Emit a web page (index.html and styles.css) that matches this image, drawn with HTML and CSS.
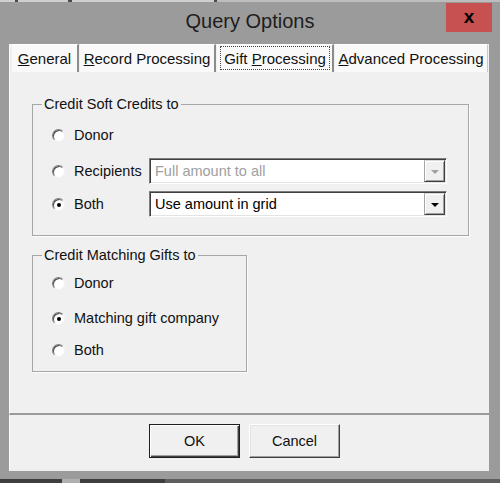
FILE: index.html
```html
<!DOCTYPE html>
<html>
<head>
<meta charset="utf-8">
<link rel="stylesheet" href="styles.css">
</head>
<body>
<div class="window">
  <div class="topstrip"></div>
  <div class="titlebar">
    <div class="title">Query Options</div>
    <div class="close">x</div>
  </div>
  <div class="client">
    <div class="tabs">
      <div class="tab t1"><span><u>G</u>eneral</span></div>
      <div class="tab t2"><span><u>R</u>ecord Processing</span></div>
      <div class="tab t3 active"><span class="focus"><span>Gift <u>P</u>rocessing</span></span></div>
      <div class="tab t4"><span><u>A</u>dvanced Processing</span></div>
    </div>
    <div class="panel">
      <fieldset class="group g1">
        <legend>Credit Soft Credits to</legend>
        <div class="row r1"><span class="radio"></span><span class="lbl">Donor</span></div>
        <div class="row r2"><span class="radio"></span><span class="lbl">Recipients</span>
          <div class="combo disabled"><span class="ctext">Full amount to all</span><span class="dd"></span></div>
        </div>
        <div class="row r3"><span class="radio checked"></span><span class="lbl">Both</span>
          <div class="combo"><span class="ctext">Use amount in grid</span><span class="dd"></span></div>
        </div>
      </fieldset>
      <fieldset class="group g2">
        <legend>Credit Matching Gifts to</legend>
        <div class="row m1"><span class="radio"></span><span>Donor</span></div>
        <div class="row m2"><span class="radio checked"></span><span>Matching gift company</span></div>
        <div class="row m3"><span class="radio"></span><span>Both</span></div>
      </fieldset>
    </div>
    <div class="buttons">
      <div class="btn default">OK</div>
      <div class="btn">Cancel</div>
    </div>
  </div>
  <div class="bottomframe"></div>
  <div class="bottomstrip"></div>
</div>
</body>
</html>
```
FILE: styles.css
```css
html, body {
  margin: 0;
  padding: 0;
  background: #9b9b9b;
}
body {
  font-family: "Liberation Sans", Arial, sans-serif;
  font-size: 14.5px;
  color: #111;
}
.window {
  width: 500px;
  height: 483px;
  background: #9b9b9b;
  display: flex;
  flex-direction: column;
  overflow: hidden;
}
.topstrip {
  height: 2px;
  flex: none;
  background: linear-gradient(to right, #cfcfcf 0 15px, #4a4a4a 15px 18px, #cfcfcf 18px 68px, #4a4a4a 68px 72px, #cfcfcf 72px 214px, #4a4a4a 214px 217px, #bdbdbd 217px);
}
.titlebar {
  height: 42px;
  flex: none;
  display: grid;
  grid-template-columns: 1fr auto 1fr;
}
.title {
  grid-column: 2;
  align-self: center;
  font-size: 20px;
  color: #1d1d1d;
  padding-bottom: 3px;
}
.close {
  grid-column: 3;
  justify-self: end;
  align-self: start;
  margin: 1px 8px 0 0;
  width: 46px;
  height: 29px;
  background: #c75050;
  color: #000;
  font-weight: bold;
  font-size: 19px;
  line-height: 1;
  display: flex;
  align-items: center;
  justify-content: center;
  padding-bottom: 3px;
  box-sizing: border-box;
}
.client {
  margin-left: 9px;
  width: 480px;
  height: 427px;
  flex: none;
  background: #f0f0f0;
  display: flex;
  flex-direction: column;
  box-shadow: inset 1px 0 0 #fbfbfb;
}
.tabs {
  height: 28px;
  flex: none;
  display: flex;
  padding-left: 3px;
  font-size: 15px;
}
.tab {
  box-sizing: border-box;
  height: 28px;
  background: #f9f9f9;
  border-top: 1px solid #fff;
  border-right: 2px solid #8c8c8c;
  margin-right: 1px;
  display: flex;
  align-items: center;
  justify-content: center;
  flex: none;
  color: #111;
}
.t1 { width: 67px; }
.t2 { width: 136px; }
.t3 { width: 117px; align-items: stretch; }
.t4 { width: 153px; border-right: 1px solid #c8c8c8; margin-right: 0; }
.focus {
  flex: 1;
  margin: 1px 2px 2px 3px;
  border: 1px dotted #444;
  display: flex;
  align-items: center;
  justify-content: center;
}
.panel {
  height: 343px;
  box-sizing: border-box;
  flex: none;
  border-left: 1px solid #fcfcfc;
  border-bottom: 2px solid #9a9a9a;
  padding: 24px 0 0 22px;
  display: flex;
  flex-direction: column;
  align-items: flex-start;
}
.group {
  margin: 0;
  box-sizing: border-box;
  border: 1px solid #a6a6a6;
  box-shadow: 1px 1px 0 #fdfdfd;
  padding: 0 20px 0 19px;
  min-inline-size: 0;
}
.group legend {
  padding: 0 2px;
  margin-left: -10px;
  line-height: 16px;
  color: #111;
}
.g1 {
  width: 437px;
  padding-bottom: 18px;
}
.g2 {
  width: 215px;
  margin-top: 11px;
  padding-bottom: 8px;
}
.row {
  height: 26px;
  display: flex;
  align-items: center;
}
.r1 { margin-top: 10px; }
.r2 { margin-top: 10px; }
.r3 { margin-top: 7px; }
.m1 { margin-top: 7px; }
.m2 { margin-top: 9px; }
.m3 { margin-top: 6px; }
.lbl {
  width: 75px;
  flex: none;
}
.radio {
  width: 13px;
  height: 13px;
  box-sizing: border-box;
  border-radius: 50%;
  background: #fff;
  border: 1px solid;
  border-color: #7e7e7e #f4f4f4 #f4f4f4 #7e7e7e;
  box-shadow: inset 1px 1px 0 #4a4a4a;
  flex: none;
  margin: 0 9px 0 0;
  display: flex;
  align-items: center;
  justify-content: center;
}
.radio.checked::after {
  content: "";
  width: 4px;
  height: 4px;
  border-radius: 50%;
  background: #000;
  margin: 1px 0 0 1px;
}
.combo {
  width: 298px;
  height: 26px;
  box-sizing: border-box;
  flex: none;
  border: 1px solid;
  border-color: #7c7c7c #fff #fff #7c7c7c;
  box-shadow: inset 1px 1px 0 #404040, inset -1px -1px 0 #e3e3e3;
  background: #fff;
  padding: 1px;
  display: flex;
}
.ctext {
  flex: 1;
  padding-left: 4px;
  display: flex;
  align-items: center;
  color: #000;
}
.combo.disabled .ctext {
  color: #a0a0a0;
}
.dd {
  width: 21px;
  flex: none;
  box-sizing: border-box;
  background: #f0f0f0;
  border: 1px solid;
  border-color: #d8d8d8 #404040 #404040 #a6a6a6;
  box-shadow: inset 1px 1px 0 #fff, inset -1px -1px 0 #a0a0a0;
  display: flex;
  align-items: center;
  justify-content: center;
}
.dd::after {
  content: "";
  border-left: 4px solid transparent;
  border-right: 4px solid transparent;
  border-top: 4px solid #000;
  margin-top: 1px;
}
.combo.disabled .dd::after {
  border-top-color: #a0a0a0;
}
.buttons {
  display: flex;
  gap: 9px;
  padding: 9px 0 0 140px;
}
.btn {
  width: 91px;
  height: 34px;
  box-sizing: border-box;
  background: #f0f0f0;
  border: 1px solid;
  border-color: #fff #404040 #404040 #fff;
  box-shadow: inset -1px -1px 0 #a0a0a0, inset 1px 1px 0 #e3e3e3;
  display: flex;
  align-items: center;
  justify-content: center;
  color: #111;
}
.btn.default {
  border-color: #1e1e1e;
  box-shadow: inset 1px 1px 0 #fff, inset -1px -1px 0 #404040, inset -2px -2px 0 #a0a0a0;
}
.bottomframe {
  height: 8px;
  flex: none;
}
.bottomstrip {
  height: 4px;
  flex: none;
  background: linear-gradient(to right, #3e3e3e 0 62px, #b0b0b0 62px 80px, #3e3e3e 80px 165px, #5e5e5e 165px);
}
```
